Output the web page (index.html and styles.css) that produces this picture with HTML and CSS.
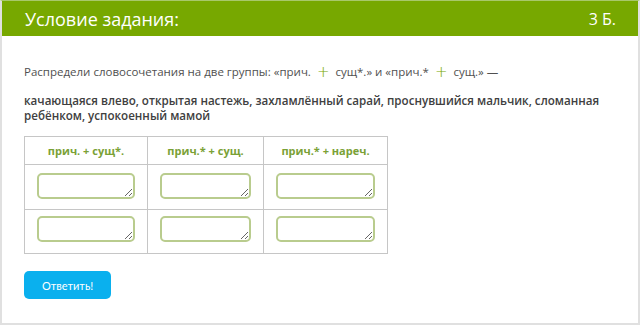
FILE: index.html
```html
<!DOCTYPE html>
<html lang="ru">
<head>
<meta charset="utf-8">
<link rel="stylesheet" href="styles.css">
</head>
<body>
<div class="card">
  <div class="card-header">
    <span class="title">Условие задания:</span>
    <span class="points">3 Б.</span>
  </div>
  <div class="card-body">
    <p class="task">Распредели словосочетания на две группы: «прич. <span class="plus">+</span> сущ*.» и «прич.* <span class="plus">+</span> сущ.» —</p>
    <p class="words">качающаяся влево, открытая настежь, захламлённый сарай, проснувшийся мальчик, сломанная ребёнком, успокоенный мамой</p>
    <table class="grid">
      <thead>
        <tr>
          <th class="c1">прич. + сущ*.</th>
          <th class="c2">прич.* + сущ.</th>
          <th class="c3">прич.* + нареч.</th>
        </tr>
      </thead>
      <tbody>
        <tr class="r1">
          <td><textarea></textarea></td>
          <td><textarea></textarea></td>
          <td><textarea></textarea></td>
        </tr>
        <tr class="r2">
          <td><textarea></textarea></td>
          <td><textarea></textarea></td>
          <td><textarea></textarea></td>
        </tr>
      </tbody>
    </table>
    <button class="answer">Ответить!</button>
  </div>
</div>
</body>
</html>
```
FILE: styles.css
```css
html, body {
  margin: 0;
  padding: 0;
  background: #ffffff;
}
body {
  font-family: "Open Sans", "Noto Sans", sans-serif;
  width: 640px;
  height: 325px;
  overflow: hidden;
}
.card {
  box-sizing: border-box;
  width: 640px;
  height: 325px;
  border: 2px solid #e0e0e0;
  border-top: 1px solid #a8c86a;
}
.card-header {
  height: 35px;
  background: #77a800;
  color: #ffffff;
  display: flex;
  align-items: center;
  justify-content: space-between;
  padding: 0 22px 0 23px;
}
.title {
  font-size: 18px;
  line-height: 1;
}
.points {
  font-size: 16px;
  line-height: 1;
}
.card-body {
  padding: 28px 0 0 22px;
}
.task {
  margin: 0;
  font-size: 11.5px;
  line-height: 16px;
  color: #505050;
}
.plus {
  display: inline-block;
  color: #78a800;
  font-family: "DejaVu Sans", sans-serif;
  font-size: 15px;
  font-weight: 300;
  line-height: 10px;
  margin: 0 3px;
  vertical-align: -1px;
}
.words {
  margin: 13px 0 0 0;
  font-size: 11.6px;
  line-height: 15px;
  font-weight: 600;
  color: #404040;
}
.grid {
  margin-top: 13px;
  border-collapse: collapse;
}
.grid th, .grid td {
  border: 1px solid #c6c6c6;
  padding: 0;
  text-align: center;
}
.grid th {
  height: 27px;
  font-size: 11px;
  font-weight: 700;
  color: #7aa136;
}
.c1 { width: 122px; }
.c2 { width: 115px; }
.c3 { width: 123px; }
.grid td {
  vertical-align: top;
}
.r1 td { height: 45px; padding-top: 8px; box-sizing: border-box; }
.r2 td { height: 44px; padding-top: 6px; box-sizing: border-box; }
.grid textarea {
  display: block;
  margin: 0 auto;
  box-sizing: border-box;
  width: calc(100% - 24px);
  height: 26px;
  border: 2px solid #b9cc8e;
  border-radius: 5px;
  background: #ffffff;
  resize: both;
  padding: 2px;
  font-family: "Open Sans", sans-serif;
}
.answer {
  display: block;
  margin-top: 17px;
  width: 87px;
  height: 28px;
  border: none;
  border-radius: 5px;
  background: #0ab0ee;
  color: #ffffff;
  font-family: "Lato", "Open Sans", sans-serif;
  font-size: 11px;
  padding: 0;
}
```
